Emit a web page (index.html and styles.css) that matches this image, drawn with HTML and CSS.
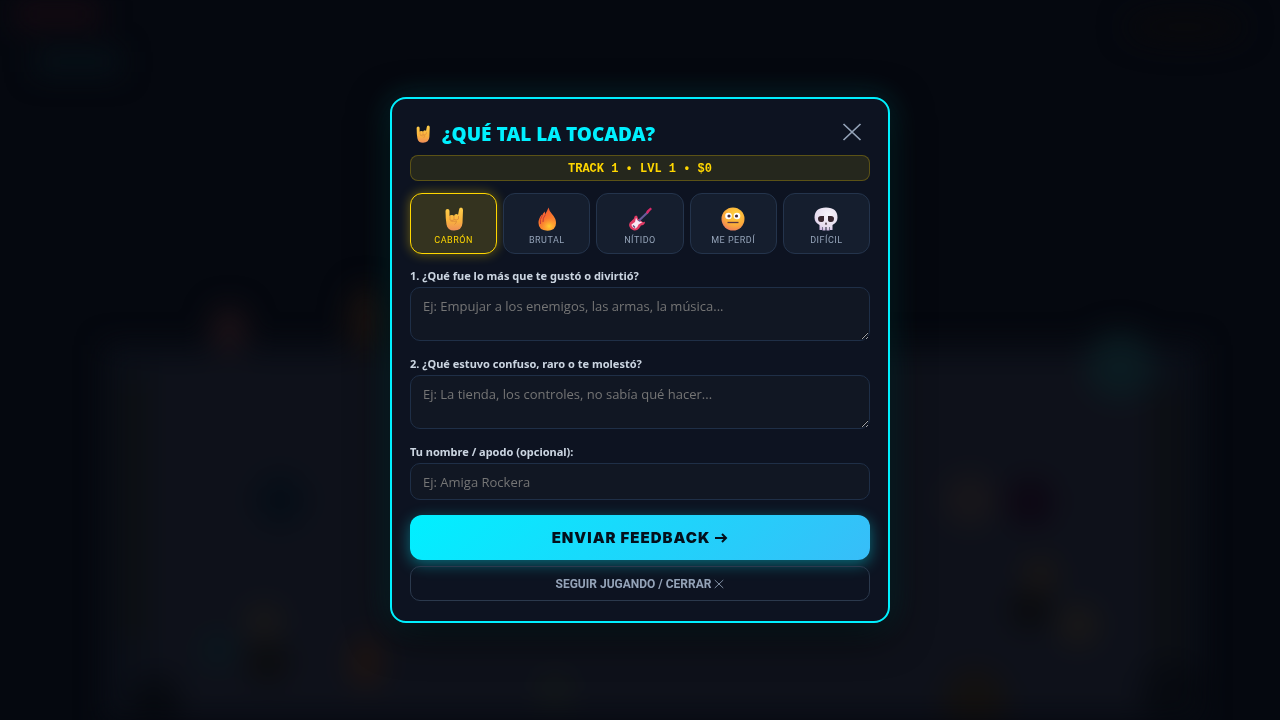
FILE: index.html
```
<!DOCTYPE html>
<html lang="es">
<head>
    <meta charset="utf-8">
    <meta name="viewport" content="width=device-width, initial-scale=1">
    <title>¿Qué tal la tocada?</title>
    <link rel="stylesheet" href="styles.css">
</head>
<body>
    <!-- shared icons -->
    <svg class="icon-defs" aria-hidden="true">
        <defs>
            <linearGradient id="skin" x1="0" y1="0" x2="0" y2="1">
                <stop offset="0" stop-color="#ffcf4a"/>
                <stop offset="0.6" stop-color="#f9b23e"/>
                <stop offset="1" stop-color="#ef8e58"/>
            </linearGradient>
            <linearGradient id="flame" x1="0" y1="0" x2="0.5" y2="1">
                <stop offset="0" stop-color="#ee4a3a"/>
                <stop offset="0.5" stop-color="#f8702e"/>
                <stop offset="1" stop-color="#ff9b31"/>
            </linearGradient>
            <radialGradient id="glow" cx="0.6" cy="0.7" r="0.5">
                <stop offset="0" stop-color="#ffcf31"/>
                <stop offset="1" stop-color="#ffa031" stop-opacity="0"/>
            </radialGradient>
            <radialGradient id="face" cx="0.6" cy="0.3" r="0.8">
                <stop offset="0" stop-color="#ffd23e"/>
                <stop offset="0.6" stop-color="#fbab3a"/>
                <stop offset="1" stop-color="#ec7266"/>
            </radialGradient>
            <radialGradient id="bone" cx="0.6" cy="0.3" r="0.8">
                <stop offset="0" stop-color="#f7f3fa"/>
                <stop offset="0.7" stop-color="#e6dcee"/>
                <stop offset="1" stop-color="#c4a9dc"/>
            </radialGradient>
            <symbol id="horns" viewBox="0 0 24 24">
                <path fill="url(#skin)" d="M3.500 4q0-2 2-2t2 2v5q0.500-1 2.500-1 1.500 0 2 1 0.500-2 2.500-2 1 0 1.500 1L17 3q0-2.500 2-2.500T21 3L20.500 16q-0.500 7.500-8.500 7.500-6.500 0-7.500-6Q3.500 12 3.500 4Z"/>
                <path fill="none" stroke="#e0913c" stroke-width="1" d="M8 9v4q2 1 4 0V9M12 12.500q2.500 1 4.500-0.500V9M8.500 14q3 1 6 0 0 2-2 3.500"/>
            </symbol>
            <symbol id="fire" viewBox="0 0 24 24">
                <path fill="url(#flame)" d="M13.500 0.500q0.500 3 3.500 6.500 4 4.500 4 9 0 7.500-8.500 7.500Q3.500 23.500 3.500 16q0-5 3.500-8.500V9q0.500-3 3-4.500v3q2-3 3.500-7Z"/>
                <circle cx="12.500" cy="16" r="8" fill="url(#glow)"/>
                <path fill="none" stroke="#c73c35" d="M7 9q-2.500 3-1.500 8M10.500 7.500Q7.500 11 8 15"/>
            </symbol>
            <symbol id="guitar" viewBox="0 0 24 24">
                <path fill="#e03a64" d="M1 18q0-2.500 2.500-4L6 11.500q0-2.500 2-3 1.500 0 1.500 1.500 0 2 2 2.500l3 2.500q1.500 0.500 2-0.500l0.500 1.500q-1.500 2.500-4 2.500l-2 3Q9 24 6 23.500 1.500 22 1 18Z"/>
                <path fill="#f6e6f2" d="M8 10.500q0.500 3 3.500 4l3 0.500-4 2.500q-1 3-3 4-4-1-4-4l3.500-2.500Z"/>
                <path stroke="#6a5b9b" stroke-width="2.200" d="M10.500 14 20 5"/>
                <path stroke="#5b4776" stroke-width="1.200" d="M5 18.500 7 20.500"/>
                <path fill="#d8296a" d="M18 5.500 19 3.500l3.500-3L24 2l-2 2-2.500 3Z"/>
            </symbol>
            <symbol id="dizzy" viewBox="0 0 24 24">
                <circle cx="12" cy="12" r="11.500" fill="url(#face)"/>
                <circle cx="7.500" cy="9" r="3.300" fill="#fff"/>
                <circle cx="16" cy="9" r="3.300" fill="#fff"/>
                <circle cx="8" cy="9" r="1.600" fill="#44283a"/>
                <circle cx="15.500" cy="9" r="1.600" fill="#44283a"/>
                <path stroke="#593442" stroke-width="1.300" d="M6.500 15.500h11"/>
            </symbol>
            <symbol id="skull" viewBox="0 0 24 24">
                <path fill="url(#bone)" d="M12 0.500q11.500 0 11.500 10 0 5-5 7.500V23H16v-3h-0.500v3.500h-3V20h-1v3.500h-3V20H8v3H5.500V18q-5-2.500-5-7.500 0-10 11.500-10Z"/>
                <path fill="#38262f" d="M4 11.500Q4 9 7 9h3v4q0 2-3 2t-3-3.500ZM20 11.500Q20 9 17 9h-3v4q0 2 3 2t3-3.500ZM10.800 17.500l1.200-2.500 1.200 2.500Z"/>
            </symbol>
            <symbol id="cross" viewBox="0 0 20 20">
                <path fill="none" stroke="currentColor" stroke-width="1.700" d="M1.500 2 18.500 18M18.500 2 1.500 18"/>
            </symbol>
            <symbol id="arrow" viewBox="0 0 14 12">
                <path fill="none" stroke="currentColor" stroke-width="2" d="M1 6h11M8 2l4 4-4 4"/>
            </symbol>
        </defs>
    </svg>

    <!-- game scene behind the dialog -->
    <svg class="scene" viewBox="0 0 1280 720" preserveAspectRatio="none" aria-hidden="true">
        <rect x="105" y="345" width="1095" height="400" fill="#0b0f18"/>
        <rect x="150" y="360" width="1000" height="400" fill="#0e111a"/>
        <rect x="124" y="380" width="18" height="260" fill="#0c0f10"/>
        <rect x="1158" y="390" width="18" height="280" fill="#0c0e0f"/>
        <rect x="15" y="0" width="85" height="28" fill="#140a11"/>
        <rect x="35" y="50" width="85" height="24" fill="#071118"/>
        <ellipse cx="229" cy="330" rx="18" ry="24" fill="#1c1217"/>
        <ellipse cx="366" cy="320" rx="18" ry="34" fill="#1a1311"/>
        <circle cx="280" cy="500" r="26" fill="#060e17"/>
        <circle cx="1120" cy="365" r="34" fill="#0b1b21"/>
        <circle cx="970" cy="500" r="26" fill="#18161a"/>
        <circle cx="1030" cy="502" r="24" fill="#0d0713"/>
        <circle cx="218" cy="650" r="16" fill="#09181e"/>
        <circle cx="264" cy="622" r="18" fill="#191818"/>
        <circle cx="268" cy="662" r="20" fill="#0b0c0e"/>
        <ellipse cx="366" cy="662" rx="16" ry="26" fill="#1f1411"/>
        <circle cx="1040" cy="575" r="18" fill="#191615"/>
        <circle cx="1030" cy="610" r="20" fill="#0a0b0e"/>
        <circle cx="1078" cy="625" r="20" fill="#1a1817"/>
        <circle cx="555" cy="690" r="16" fill="#131818"/>
        <circle cx="975" cy="700" r="32" fill="#131110"/>
        <circle cx="155" cy="700" r="26" fill="#070a10"/>
        <circle cx="1170" cy="690" r="30" fill="#070a10"/>
        <ellipse cx="1185" cy="27" rx="60" ry="16" fill="#09090c"/>
    </svg>

    <main class="overlay">
        <form class="modal" role="dialog" aria-labelledby="modalTitle">
            <header class="modal-header">
                <h1 id="modalTitle" class="modal-title"><svg class="title-icon"><use href="#horns"/></svg>¿QUÉ TAL LA TOCADA?</h1>
                <button type="button" class="btn-x" aria-label="Cerrar"><svg class="x-icon"><use href="#cross"/></svg></button>
            </header>
            <div class="run-info">TRACK 1 • LVL 1 • $0</div>
            <div class="ratings">
                <button type="button" class="rating selected"><svg class="rating-icon"><use href="#horns"/></svg>CABRÓN</button>
                <button type="button" class="rating"><svg class="rating-icon"><use href="#fire"/></svg>BRUTAL</button>
                <button type="button" class="rating"><svg class="rating-icon"><use href="#guitar"/></svg>NÍTIDO</button>
                <button type="button" class="rating"><svg class="rating-icon"><use href="#dizzy"/></svg>ME PERDÍ</button>
                <button type="button" class="rating"><svg class="rating-icon"><use href="#skull"/></svg>DIFÍCIL</button>
            </div>
            <div class="field">
                <label for="liked">1. ¿Qué fue lo más que te gustó o divirtió?</label>
                <textarea id="liked" rows="2" placeholder="Ej: Empujar a los enemigos, las armas, la música..."></textarea>
            </div>
            <div class="field">
                <label for="confusing">2. ¿Qué estuvo confuso, raro o te molestó?</label>
                <textarea id="confusing" rows="2" placeholder="Ej: La tienda, los controles, no sabía qué hacer..."></textarea>
            </div>
            <div class="field">
                <label for="nick">Tu nombre / apodo (opcional):</label>
                <input id="nick" type="text" placeholder="Ej: Amiga Rockera">
            </div>
            <div class="actions">
                <button type="button" class="btn-send">ENVIAR FEEDBACK <svg class="send-icon"><use href="#arrow"/></svg></button>
                <button type="button" class="btn-close">SEGUIR JUGANDO / CERRAR <svg class="close-icon"><use href="#cross"/></svg></button>
            </div>
        </form>
    </main>

    <script>
        const ratings = document.querySelectorAll(".rating");
        ratings.forEach(function(btn) {
            btn.addEventListener("click", function() {
                ratings.forEach(function(b) { b.classList.remove("selected"); });
                btn.classList.add("selected");
            });
        });
    </script>
</body>
</html>
```
FILE: styles.css
```
* {
    box-sizing: border-box;
}
body {
    margin: 0;
    background: #05080f;
    font-family: "Noto Sans", sans-serif;
    overflow: hidden;
}
.icon-defs {
    position: absolute;
    width: 0;
    height: 0;
}
.scene {
    position: fixed;
    inset: 0;
    width: 100%;
    height: 100%;
    filter: blur(14px);
}
.overlay {
    position: relative;
    display: flex;
    align-items: center;
    justify-content: center;
    min-height: 100vh;
    padding: 16px;
}
.modal {
    width: 100%;
    max-width: 500px;
    padding: 18px 18px 20px;
    border: 2px solid #00f0ff;
    border-radius: 16px;
    background: #0d1321;
    box-shadow: 0 10px 40px rgba(0, 0, 0, 0.8), 0 0 30px rgba(0, 240, 255, 0.2);
}
.modal-header {
    display: flex;
    align-items: center;
    justify-content: space-between;
    height: 30px;
    margin-bottom: 8px;
    padding: 0 8px 0 4px;
}
.modal-title {
    display: flex;
    align-items: center;
    gap: 10px;
    margin: 0;
    padding-top: 4px;
    color: #00f0ff;
    font-size: 19px;
    font-weight: 900;
}
.title-icon {
    width: 18px;
    height: 20px;
}
.btn-x {
    padding: 0;
    border: 0;
    background: none;
    color: #94a3b8;
    line-height: 0;
    cursor: pointer;
}
.x-icon {
    width: 20px;
    height: 20px;
}
.run-info {
    margin-bottom: 12px;
    padding: 5px 10px 3px;
    border: 1px solid rgba(255, 215, 0, 0.25);
    border-radius: 8px;
    background: rgba(255, 215, 0, 0.1);
    color: #ffd700;
    font-family: "Liberation Mono", monospace;
    font-size: 12px;
    font-weight: bold;
    line-height: 16px;
    text-align: center;
}
.ratings {
    display: grid;
    grid-template-columns: repeat(5, 1fr);
    gap: 6px;
    margin-bottom: 14px;
}
.rating {
    display: flex;
    flex-direction: column;
    align-items: center;
    gap: 2px;
    padding: 13px 4px 6px;
    border: 1px solid #24344c;
    border-radius: 12px;
    background: #151e2e;
    color: #94a3b8;
    font-family: "Roboto", sans-serif;
    font-size: 9px;
    line-height: 14px;
    letter-spacing: 0.5px;
    cursor: pointer;
}
.rating.selected {
    border-color: #ffd700;
    background: #34331f;
    color: #ffd700;
    box-shadow: 0 0 12px rgba(255, 215, 0, 0.4);
}
.rating-icon {
    width: 24px;
    height: 24px;
}
.field {
    display: flex;
    flex-direction: column;
    gap: 3px;
    margin-bottom: 15px;
}
.field label {
    color: #cbd5e1;
    font-size: 11px;
    font-weight: 700;
    line-height: 16px;
}
.field textarea,
.field input {
    width: 100%;
    padding: 9px 12px 7px;
    border: 1px solid #1f2f47;
    border-radius: 10px;
    background: #111723;
    color: #fff;
    font-family: "Open Sans", sans-serif;
    font-size: 13px;
    line-height: 19px;
}
.field textarea {
    height: 54px;
    resize: vertical;
}
.actions {
    display: flex;
    flex-direction: column;
    gap: 6px;
}
.btn-send {
    height: 45px;
    border: 0;
    border-radius: 12px;
    background: linear-gradient(135deg, #00f0ff, #38bdf8);
    box-shadow: 0 4px 15px rgba(0, 240, 255, 0.4);
    color: #04101c;
    font-family: "Inter", sans-serif;
    font-size: 15px;
    font-weight: 900;
    letter-spacing: 1px;
    cursor: pointer;
}
.send-icon {
    width: 14px;
    height: 12px;
    vertical-align: -1px;
}
.btn-close {
    height: 35px;
    border: 1px solid #2b394d;
    border-radius: 10px;
    background: none;
    color: #94a3b8;
    font-family: "Roboto", sans-serif;
    font-size: 12px;
    font-weight: bold;
    cursor: pointer;
}
.close-icon {
    width: 10px;
    height: 10px;
    vertical-align: -1px;
}
```
